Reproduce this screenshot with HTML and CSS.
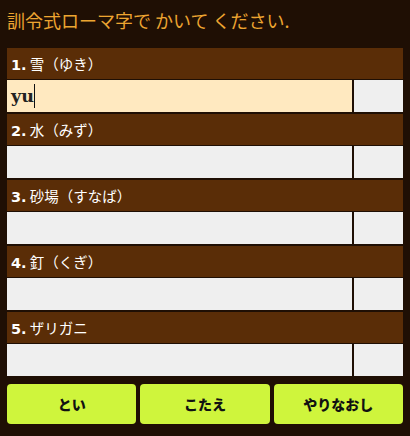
FILE: index.html
```
<!DOCTYPE html>
<html lang="ja">
<head>
<meta charset="utf-8">
<link rel="stylesheet" href="styles.css">
</head>
<body>
<div class="page">
  <h1 class="title">訓令式ローマ字で かいて ください.</h1>
  <div class="list">
    <div class="item">
      <div class="q"><b class="num">1.</b> 雪（ゆき）</div>
      <div class="row">
        <div class="answer active"><span class="typed">yu</span><span class="caret"></span></div>
        <div class="mark"></div>
      </div>
    </div>
    <div class="item">
      <div class="q"><b class="num">2.</b> 水（みず）</div>
      <div class="row">
        <div class="answer"></div>
        <div class="mark"></div>
      </div>
    </div>
    <div class="item">
      <div class="q"><b class="num">3.</b> 砂場（すなば）</div>
      <div class="row">
        <div class="answer"></div>
        <div class="mark"></div>
      </div>
    </div>
    <div class="item">
      <div class="q"><b class="num">4.</b> 釘（くぎ）</div>
      <div class="row">
        <div class="answer"></div>
        <div class="mark"></div>
      </div>
    </div>
    <div class="item">
      <div class="q"><b class="num">5.</b> ザリガニ</div>
      <div class="row">
        <div class="answer"></div>
        <div class="mark"></div>
      </div>
    </div>
  </div>
  <div class="buttons">
    <button class="btn">とい</button>
    <button class="btn">こたえ</button>
    <button class="btn">やりなおし</button>
  </div>
</div>
</body>
</html>
```
FILE: styles.css
```
html, body {
  margin: 0;
  padding: 0;
  background: #1f0f04;
}
.page {
  padding: 0 7px 0 7px;
  width: 396px;
  font-family: "DejaVu Sans", "Noto Sans CJK JP", sans-serif;
}
.title {
  margin: 0;
  padding-top: 8px;
  height: 48px;
  box-sizing: border-box;
  font-family: "Noto Sans CJK JP", sans-serif;
  font-weight: normal;
  font-size: 18px;
  line-height: 24px;
  color: #eda531;
}
.list {
  display: flex;
  flex-direction: column;
  gap: 2px;
}
.item {
  display: flex;
  flex-direction: column;
  gap: 1px;
}
.q {
  height: 31px;
  background: #5a2d07;
  color: #ffffff;
  font-size: 14.5px;
  line-height: 31px;
  padding-left: 4px;
  font-family: "Noto Sans CJK JP", sans-serif;
}
.num {
  font-family: "DejaVu Sans", sans-serif;
  font-weight: bold;
  font-size: 14.5px;
}
.row {
  display: flex;
  gap: 2px;
  height: 32px;
}
.answer {
  flex: 1;
  background: #efefef;
  display: flex;
  align-items: center;
  padding-left: 4px;
}
.answer.active {
  background: #ffe9c0;
}
.typed {
  font-family: "DejaVu Serif", serif;
  font-weight: bold;
  font-size: 17.5px;
  color: #222;
}
.caret {
  width: 1px;
  height: 24px;
  background: #111;
}
.mark {
  width: 49px;
  background: #efefef;
}
.buttons {
  margin-top: 8px;
  display: grid;
  grid-template-columns: 1fr 1fr 1fr;
  gap: 4px;
}
.btn {
  height: 40px;
  border: none;
  border-radius: 4px;
  background: #cff53c;
  color: #111;
  font-family: "Noto Sans CJK JP", sans-serif;
  font-weight: 900;
  font-size: 14px;
  padding: 0;
}
```
